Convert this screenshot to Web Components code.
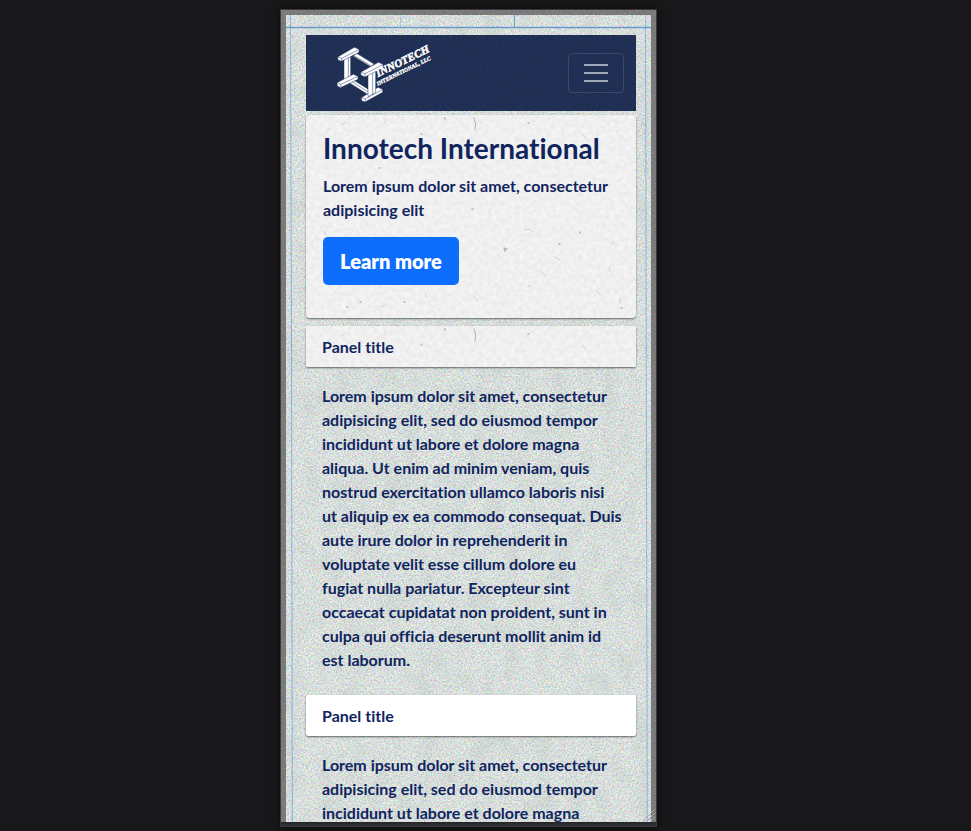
<!DOCTYPE html>
<html lang="en">
<head>
<meta charset="utf-8">
<meta name="viewport" content="width=device-width, initial-scale=1">
<title>Innotech International</title>
<style>
  html { background: #18181a; }
  body { margin: 0; color: #10245e; font: 700 16px/24px Lato, "Open Sans", sans-serif; font-variant-ligatures: none; }
</style>
</head>
<body>
<preview-stage>
  <device-frame>
    <site-nav></site-nav>
    <hero-card>
      <span slot="title">Innotech International</span>
      Lorem ipsum dolor sit amet, consectetur adipisicing elit
      <span slot="action">Learn more</span>
    </hero-card>
    <content-panel textured>
      <span slot="title">Panel title</span>
      Lorem ipsum dolor sit amet, consectetur adipisicing elit, sed do eiusmod tempor incididunt ut labore et dolore magna aliqua. Ut enim ad minim veniam, quis nostrud exercitation ullamco laboris nisi ut aliquip ex ea commodo consequat. Duis aute irure dolor in reprehenderit in voluptate velit esse cillum dolore eu <br>fugiat nulla pariatur. Excepteur sint occaecat cupidatat non proident, sunt in culpa qui officia deserunt mollit anim id est laborum.
    </content-panel>
    <content-panel>
      <span slot="title">Panel title</span>
      Lorem ipsum dolor sit amet, consectetur adipisicing elit, sed do eiusmod tempor incididunt ut labore et dolore magna
    </content-panel>
  </device-frame>
</preview-stage>
<script>
const define = (name, html) => {
  const template = document.createElement('template');
  template.innerHTML = html;
  customElements.define(name, class extends HTMLElement {
    constructor() {
      super();
      this.attachShadow({ mode: 'open' }).append(template.content.cloneNode(true));
    }
  });
};

/* Textured fill behind an element's content. */
const grains = {
  concrete: `<filter id="g" x="0" y="0" width="100%" height="100%" color-interpolation-filters="sRGB">
      <feTurbulence type="fractalNoise" baseFrequency="0.6" numOctaves="3" seed="4" result="fine"/>
      <feColorMatrix in="fine" values=".56 0 0 0 .57  0 .48 0 0 .635  0 0 .56 0 .585  0 0 0 0 1" result="a"/>
      <feTurbulence type="fractalNoise" baseFrequency="0.06 0.035" numOctaves="4" seed="9" result="cloud"/>
      <feColorMatrix in="cloud" values="0 0 0 0 .66  0 0 0 0 .71  0 0 0 0 .69  .5 0 0 0 -.2" result="b"/>
      <feMerge><feMergeNode in="a"/><feMergeNode in="b"/></feMerge></filter>`,
  paper: `<filter id="g" x="0" y="0" width="100%" height="100%" color-interpolation-filters="sRGB">
      <feTurbulence type="fractalNoise" baseFrequency="0.22" numOctaves="4" seed="7"/>
      <feColorMatrix values=".08 0 0 0 .9  .08 0 0 0 .9  .08 0 0 0 .9  0 0 0 0 1"/></filter>`,
  navy: `<filter id="g" x="0" y="0" width="100%" height="100%" color-interpolation-filters="sRGB">
      <feTurbulence type="fractalNoise" baseFrequency="0.3" numOctaves="3" seed="2"/>
      <feColorMatrix values=".04 0 0 0 .105  .04 0 0 0 .165  -.08 0 0 0 .37  0 0 0 0 1"/></filter>`,
  metal: `<filter id="g" x="0" y="0" width="100%" height="100%" color-interpolation-filters="sRGB">
      <feTurbulence type="fractalNoise" baseFrequency="0.6" numOctaves="2" seed="3"/>
      <feColorMatrix values=".14 0 0 0 .41  .14 0 0 0 .41  .14 0 0 0 .41  0 0 0 0 1"/></filter>`
};
const specks = `<g fill="none" stroke="#8b8b8b" stroke-linecap="round" opacity=".6">
  <path d="M168 3q3 6 1 12" stroke-width="1"/>
  <path d="M222 8h1M115 19h1M139 3v1M73 53h1M199 133v3M198 134h3M253 129h1M274 117v1M54 187h1M41 192h1M98 187h1M315 193h1M166 94h1" stroke-width="1.5"/>
  <path d="M75 192l5-2M119 178l2 4M219 115l5-1 3 3M235 156l4 5M304 151l-1 5M35 10l5-3M130 72l3 4M247 73h4M17 116l3 4M276 19l4 4M95 95l3-1M80 6l-2 3M290 175l4 5M222 172l3-2M248 142l6 3M168 182l4 4M305 129l3-2M314 184v4M24 13l-3 4M60 70l3-4" stroke-width="1" opacity=".5"/></g>`;

customElements.define('grain-layer', class extends HTMLElement {
  connectedCallback() {
    if (this.shadowRoot) return;
    const kind = this.getAttribute('kind');
    this.attachShadow({ mode: 'open' }).innerHTML = `
      <style>
        :host { position: absolute; inset: 0; overflow: hidden; border-radius: inherit; z-index: -1; pointer-events: none; }
        svg { display: block; width: 100%; height: 100%; }
      </style>
      <svg aria-hidden="true">${grains[kind]}<rect width="100%" height="100%" filter="url(#g)"/>${kind === 'paper' ? specks : ''}</svg>`;
  }
});

define('preview-stage', `
  <style>
    :host { display: flex; justify-content: center; box-sizing: border-box; height: 100vh; padding: 10px 34px 5px 0; overflow: hidden; }
  </style>
  <slot></slot>`);

define('device-frame', `
  <style>
    :host { display: flex; position: relative; isolation: isolate; box-sizing: border-box; width: 375px; max-width: 100%; padding: 5px 5px 4px;
      box-shadow: 0 0 0 1px #3b3b3d, 0 0 6px 1px #0b0b0c; }
    .rim { position: absolute; inset: auto 0 0 0; height: 4px; background: linear-gradient(#252527, #323234); }
    .screen { position: relative; isolation: isolate; flex: 1; min-width: 0; overflow: hidden; padding: 20px 15px 0 20px; }
    .lines { position: absolute; inset: 0; width: 100%; height: 100%; z-index: -1; }
    .grip { position: absolute; right: 0; bottom: 4px; width: 14px; height: 14px; }
  </style>
  <grain-layer kind="metal"></grain-layer>
  <div class="rim"></div>
  <div class="screen">
    <grain-layer kind="concrete"></grain-layer>
    <svg class="lines" aria-hidden="true" fill="none" stroke="#5a9be0">
      <path d="M4.500 0L5.500 330L6.500 900" opacity=".65"/>
      <svg x="100%" overflow="visible"><path d="M-5.500 0L-3.500 900" opacity=".6"/></svg>
      <path d="M0 12.500H900" stroke="#4f83bd" opacity=".8"/>
      <path d="M0 11.500H900M0 13.500H900" opacity=".2"/>
      <path d="M114.500 0V12" opacity=".35"/>
      <path d="M228.500 0V12" opacity=".9"/>
    </svg>
    <slot></slot>
  </div>
  <svg class="grip" viewBox="0 0 14 14" aria-hidden="true" fill="none" stroke="#aaa" stroke-width="1"><path d="M1 13L13 1M5 13L13 5M9 13L13 9"/></svg>`);

define('brand-logo', `
  <style>
    :host { display: block; }
    a { display: block; color: #fff; }
    svg { display: block; width: 110px; height: 70px; }
    text { fill: #fff; stroke: #fff; font-family: "Liberation Serif", serif; font-weight: 700; font-style: italic; }
  </style>
  <a href="#" aria-label="Innotech International, LLC">
    <svg viewBox="0 0 330 210">
      <g fill="#fff" stroke="#25345f" stroke-width="1.500" stroke-linejoin="round">
        <path d="M69 54L80 46L132 78L122 86Z"/>
        <path d="M72 53L124 84" fill="none"/>
        <path d="M54 132L66 123L118 156L116 171Z"/>
        <path d="M60 127L116 163" fill="none"/>
        <path d="M42 54L62 46V122L42 130Z"/>
        <path d="M55 52V124" fill="none"/>
        <path d="M23 57L73 28L87 34V43L34 70L24 66Z"/>
        <path d="M24 57L35 61L86 35M35 61V69" fill="none"/>
        <path d="M21 134L70 109L84 115V124L31 149L22 144Z"/>
        <path d="M22 134L32 139L83 116M32 139V148" fill="none"/>
        <path d="M94 179L144 148L158 154V163L105 192L95 188Z"/>
        <path d="M95 179L106 183L157 155M106 183V191" fill="none"/>
        <path d="M114 102L137 92V164L114 176Z"/>
        <path d="M128 98V170" fill="none"/>
        <path d="M92 103L145 73L159 79V89L105 117L93 112Z"/>
        <path d="M93 103L105 107L158 80M105 107V116" fill="none"/>
      </g>
      <text transform="translate(144 117) rotate(-26)" font-size="33" stroke-width="1.500">INNOTECH</text>
      <text transform="translate(143 143) rotate(-26)" font-size="17" stroke-width="1">INTERNATIONAL, LLC</text>
    </svg>
  </a>`);

define('site-nav', `
  <style>
    :host { display: flex; position: relative; isolation: isolate; align-items: center; justify-content: space-between; box-sizing: border-box; height: 76px; padding: 0 12px 0 24px; margin-bottom: 4px; }
    button { display: grid; place-items: center; width: 56px; height: 40px; padding: 0; border: 1px solid #3b4869; border-radius: 4px; background: none; cursor: pointer; }
    svg { display: block; width: 30px; height: 30px; }
  </style>
  <grain-layer kind="navy"></grain-layer>
  <brand-logo></brand-logo>
  <button type="button" aria-label="Toggle navigation">
    <svg viewBox="0 0 30 30" stroke="#9fa6ba" stroke-width="2" stroke-linecap="butt"><path d="M3 7H27M3 15H27M3 23H27"/></svg>
  </button>`);

define('hero-card', `
  <style>
    :host { display: block; position: relative; isolation: isolate; padding: 17px 17px 33px; margin-bottom: 8px; border-radius: 4px; box-shadow: 0 1px 2px rgba(0,0,0,.55); }
    h1 { margin: 0 0 10px; font-size: 28px; line-height: 32px; font-weight: inherit; }
    p { margin: 0 0 15px; }
    button { display: block; height: 48px; padding: 0 17px; border: 0; border-radius: 5px; background: #0d6efd; color: #fff; font: inherit; font-size: 20px; line-height: 30px; font-weight: 800; cursor: pointer; }
  </style>
  <grain-layer kind="paper"></grain-layer>
  <h1><slot name="title"></slot></h1>
  <p><slot></slot></p>
  <button type="button"><slot name="action"></slot></button>`);

define('content-panel', `
  <style>
    :host { display: block; margin-bottom: 7px; }
    header { position: relative; isolation: isolate; padding: 9px 16px 8px; background: #fff; border-radius: 2px; box-shadow: 0 1px 2px rgba(0,0,0,.55); }
    grain-layer { display: none; }
    :host([textured]) grain-layer { display: block; }
    h2 { margin: 0; font: inherit; }
    p { margin: 0; padding: 17px 14px 16px 16px; }
  </style>
  <header><grain-layer kind="paper"></grain-layer><h2><slot name="title"></slot></h2></header>
  <p><slot></slot></p>`);
</script>
</body>
</html>
